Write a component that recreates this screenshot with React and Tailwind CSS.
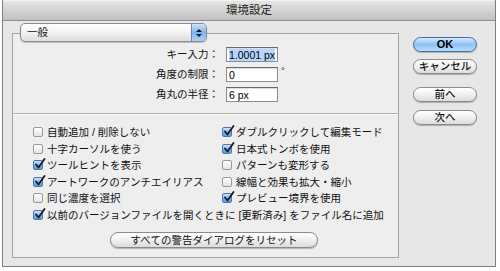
import React from 'react'

const left = [
  { label: '自動追加 / 削除しない', on: false },
  { label: '十字カーソルを使う', on: false },
  { label: 'ツールヒントを表示', on: true },
  { label: 'アートワークのアンチエイリアス', on: true },
  { label: '同じ濃度を選択', on: false },
]

const right = [
  { label: 'ダブルクリックして編集モード', on: true },
  { label: '日本式トンボを使用', on: true },
  { label: 'パターンも変形する', on: false },
  { label: '線幅と効果も拡大・縮小', on: false },
  { label: 'プレビュー境界を使用', on: true },
]

function Check({ on }) {
  if (!on) {
    return (
      <span className="relative w-[10px] h-[10px] shrink-0 rounded-[2px] border border-[#9a9a9a] bg-gradient-to-b from-white to-[#e4e4e4]" />
    )
  }
  return (
    <span className="relative w-[10px] h-[10px] shrink-0 rounded-[2px] border border-[#4a78b0] bg-gradient-to-b from-[#cfe4fb] via-[#7fb4ec] to-[#5b9ce6]">
      <svg className="absolute -top-[3px] left-[0px]" width="12" height="12" viewBox="0 0 12 12">
        <path d="M2 6.5 L4.5 9.5 L10.5 1" fill="none" stroke="#1a1a1a" strokeWidth="1.8" strokeLinecap="round" strokeLinejoin="round" />
      </svg>
    </span>
  )
}

function Row({ label, on }) {
  return (
    <div className="flex items-center gap-[4px] h-[16.5px] whitespace-nowrap">
      <Check on={on} />
      <span className="text-[10.5px] text-[#111] leading-none">{label}</span>
    </div>
  )
}

function AquaButton({ children, primary, className = '' }) {
  return (
    <div
      className={
        'flex items-center justify-center h-[15px] rounded-full border leading-none whitespace-nowrap shadow-[0_1px_1px_rgba(0,0,0,0.25)] ' +
        (primary
          ? 'border-[#3f6fa8] bg-gradient-to-b from-[#d6eafd] via-[#8fc0f2] to-[#b8dcfb] font-bold text-black '
          : 'border-[#8a8a8a] bg-gradient-to-b from-white via-[#f0f0f0] to-[#dcdcdc] text-[#111] ') +
        className
      }
    >
      {children}
    </div>
  )
}

function Field({ label, value, selected, suffix }) {
  return (
    <div className="flex items-center h-[15px]">
      <div className="w-[206px] text-right text-[10.5px] text-[#111] leading-none whitespace-nowrap">{label}</div>
      <div className="ml-[7px] w-[52px] h-[15px] flex items-center bg-white border border-[#8e8e8e] border-t-[#6a6a6a] shadow-[inset_0_1px_1px_rgba(0,0,0,0.15)] pl-[2px] overflow-hidden">
        <span className={'text-[10.5px] leading-[12px] text-black whitespace-nowrap ' + (selected ? 'bg-[#b5d5ff]' : '')}>{value}</span>
      </div>
      {suffix && <span className="ml-[3px] -mt-[6px] text-[9px] text-[#111]">{suffix}</span>}
    </div>
  )
}

export default function App() {
  return (
    <div className="w-[500px] h-[271px] bg-white font-['Liberation_Sans','Noto_Sans_CJK_JP',sans-serif] overflow-hidden">
      <div className="ml-[2px] w-[494px] h-[267px] border-x border-b border-[#7d7d7d] bg-[#e7e7e7] flex flex-col">
        {/* Title bar */}
        <div className="h-[21px] shrink-0 flex items-center justify-center border-b border-[#8f8f8f] bg-gradient-to-b from-[#e6e6e6] to-[#c0c0c0] border-t border-t-[#f4f4f4]">
          <span className="text-[11.5px] text-[#222] leading-none">環境設定</span>
        </div>

        <div className="flex">
          {/* Left column */}
          <div className="ml-[9px] w-[387px] pt-[2px] flex flex-col">
            {/* Popup */}
            <div className="relative z-10 ml-[8px] w-[187px] h-[19px] flex rounded-[5px] border border-[#8a8a8a] bg-gradient-to-b from-white via-[#f2f2f2] to-[#dedede] shadow-[0_1px_1px_rgba(0,0,0,0.2)] overflow-hidden">
              <div className="flex-1 flex items-center pl-[6px] text-[10.5px] text-[#111] leading-none">一般</div>
              <div className="w-[15px] border-l border-[#5f88b8] bg-gradient-to-b from-[#cfe4fb] via-[#7fb4ec] to-[#a9d2fa] flex flex-col items-center justify-center gap-[2px]">
                <svg width="6" height="3" viewBox="0 0 6 3"><path d="M0 3 L3 0 L6 3 Z" fill="#1a1a1a" /></svg>
                <svg width="6" height="3" viewBox="0 0 6 3"><path d="M0 0 L3 3 L6 0 Z" fill="#1a1a1a" /></svg>
              </div>
            </div>

            {/* Group box */}
            <div className="-mt-[9px] border border-[#a3a3a3] bg-[#eeeeee]">
              <div className="pt-[13px] pb-[11px] flex flex-col gap-[5px]">
                <Field label="キー入力：" value="1.0001 px" selected />
                <Field label="角度の制限：" value="0" suffix="°" />
                <Field label="角丸の半径：" value="6 px" />
              </div>
              <div className="border-t border-[#b0b0b0] shadow-[0_1px_0_#fafafa]" />
              <div className="pt-[10px] pb-[9px] pl-[20px]">
                <div className="grid grid-cols-[189px_1fr]">
                  <div className="flex flex-col">
                    {left.map((r) => <Row key={r.label} {...r} />)}
                  </div>
                  <div className="flex flex-col">
                    {right.map((r) => <Row key={r.label} {...r} />)}
                  </div>
                </div>
                <Row label="以前のバージョンファイルを開くときに [更新済み] をファイル名に追加" on />
                <AquaButton className="mt-[9px] ml-[77px] w-[208px] h-[16px] text-[10.5px]">すべての警告ダイアログをリセット</AquaButton>
              </div>
            </div>
          </div>

          {/* Right buttons */}
          <div className="ml-[14px] w-[64px] pt-[16px] flex flex-col">
            <AquaButton primary className="text-[11px]">OK</AquaButton>
            <AquaButton className="mt-[7px] text-[10.5px] font-medium">キャンセル</AquaButton>
            <AquaButton className="mt-[13px] text-[10.5px] font-medium">前へ</AquaButton>
            <AquaButton className="mt-[8px] text-[10.5px] font-medium">次へ</AquaButton>
          </div>
        </div>
      </div>
    </div>
  )
}
